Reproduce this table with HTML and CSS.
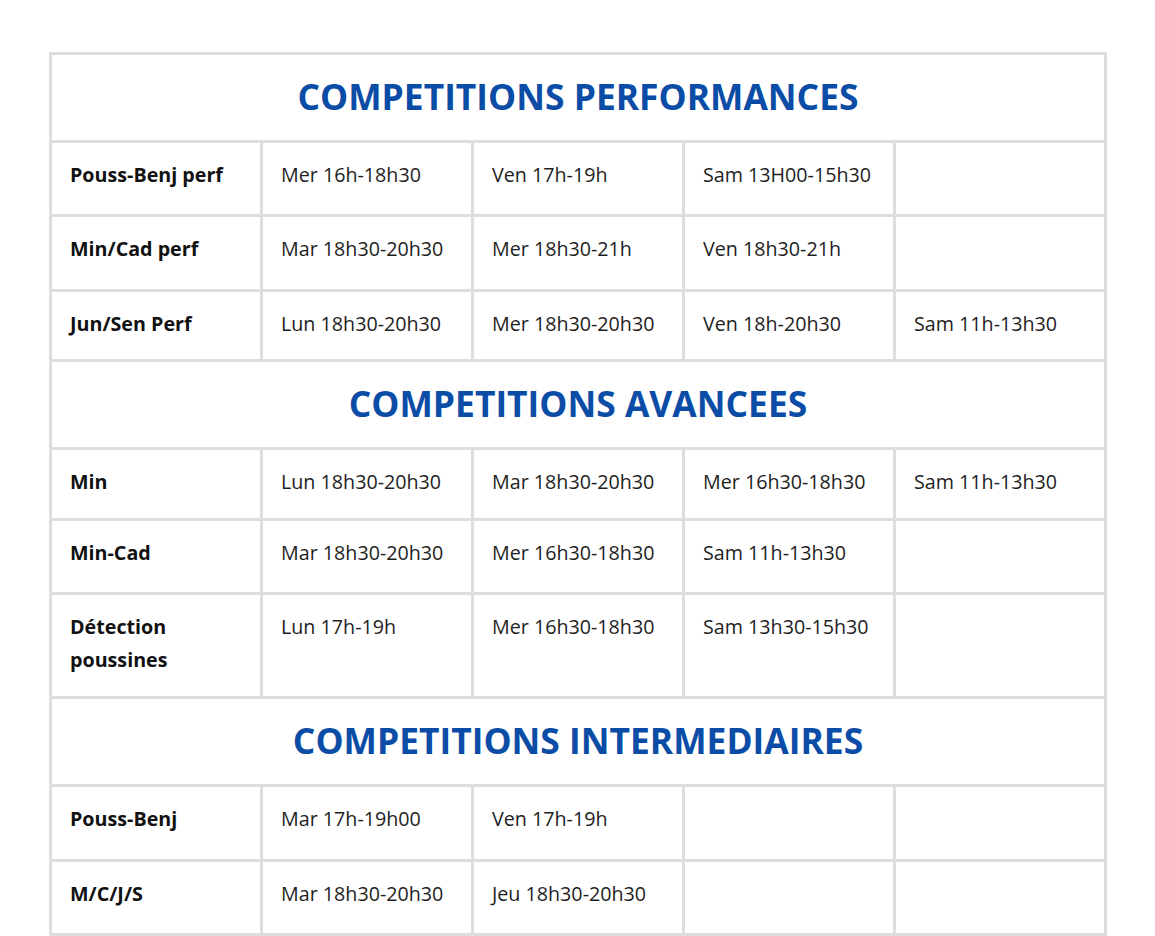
FILE: index.html
```html
<!DOCTYPE html>
<html lang="fr">
<head>
<meta charset="utf-8">
<title>Compétitions</title>
<link rel="stylesheet" href="styles.css">
</head>
<body>
<div class="page">
<table class="schedule">
  <colgroup><col><col><col><col><col></colgroup>
  <tbody>
    <tr class="head"><th colspan="5">COMPETITIONS PERFORMANCES</th></tr>
    <tr class="row-open"><td class="label">Pouss-Benj perf</td><td>Mer 16h-18h30</td><td>Ven 17h-19h</td><td>Sam 13H00-15h30</td><td></td></tr>
    <tr class="row-open"><td class="label">Min/Cad perf</td><td>Mar 18h30-20h30</td><td>Mer 18h30-21h</td><td>Ven 18h30-21h</td><td></td></tr>
    <tr class="row-full"><td class="label">Jun/Sen Perf</td><td>Lun 18h30-20h30</td><td>Mer 18h30-20h30</td><td>Ven 18h-20h30</td><td>Sam 11h-13h30</td></tr>
    <tr class="head"><th colspan="5">COMPETITIONS AVANCEES</th></tr>
    <tr class="row-full row-wide"><td class="label">Min</td><td>Lun 18h30-20h30</td><td>Mar 18h30-20h30</td><td>Mer 16h30-18h30</td><td>Sam 11h-13h30</td></tr>
    <tr class="row-open"><td class="label">Min-Cad</td><td>Mar 18h30-20h30</td><td>Mer 16h30-18h30</td><td>Sam 11h-13h30</td><td></td></tr>
    <tr class="row-open"><td class="label">Détection poussines</td><td>Lun 17h-19h</td><td>Mer 16h30-18h30</td><td>Sam 13h30-15h30</td><td></td></tr>
    <tr class="head"><th colspan="5">COMPETITIONS INTERMEDIAIRES</th></tr>
    <tr class="row-open"><td class="label">Pouss-Benj</td><td>Mar 17h-19h00</td><td>Ven 17h-19h</td><td></td><td></td></tr>
    <tr class="row-open"><td class="label">M/C/J/S</td><td>Mar 18h30-20h30</td><td>Jeu 18h30-20h30</td><td></td><td></td></tr>
  </tbody>
</table>
</div>
</body>
</html>
```
FILE: styles.css
```css
html, body {
  margin: 0;
  padding: 0;
  background: #fff;
}
body {
  font-family: "Open Sans", "Noto Sans", sans-serif;
  color: #1e1e1e;
}
.page {
  padding: 52px 0 0 49px;
}
.schedule {
  width: 1058px;
  border-collapse: collapse;
  table-layout: fixed;
  border: 3px solid #dedede;
}
.schedule th,
.schedule td {
  border: 3px solid #dedede;
}
.schedule th {
  height: 82px;
  padding: 0 0 3px;
  text-align: center;
  vertical-align: middle;
  font-size: 35.4px;
  font-weight: 700;
  color: #0a4ca6;
  letter-spacing: 0;
}
.schedule td {
  padding: 15px 18px 20px 18px;
  vertical-align: top;
  font-size: 19.7px;
  line-height: 33px;
  box-sizing: border-box;
}
.schedule td.label {
  font-weight: 700;
  color: #111;
}
.row-open td {
  height: 74.4px;
}
.schedule .row-full td {
  height: 70px;
  padding-bottom: 16px;
}
.schedule .row-full.row-wide td {
  height: 71px;
}
```
